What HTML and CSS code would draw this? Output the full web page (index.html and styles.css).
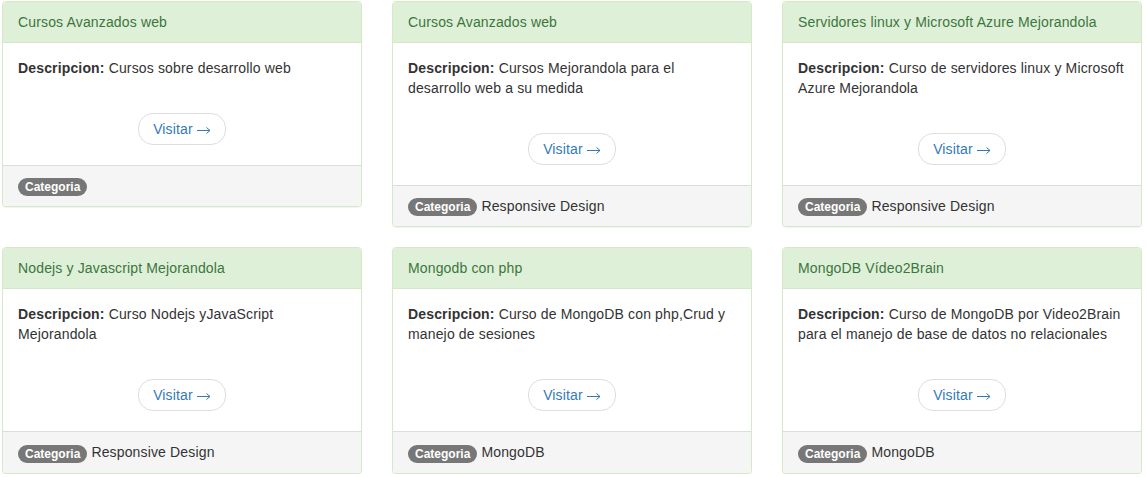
FILE: index.html
```html
<!DOCTYPE html>
<html lang="es">
<head>
<meta charset="utf-8">
<title>Cursos</title>
<link rel="stylesheet" href="styles.css">
</head>
<body>
<div class="grid">
  <div class="panel">
    <div class="panel-heading">Cursos Avanzados web</div>
    <div class="panel-body">
      <p><strong>Descripcion:</strong> Cursos sobre desarrollo web</p>
      <div class="pager"><a href="#">Visitar <svg class="arrow" viewBox="0 0 14 9" width="14" height="9"><path d="M0 4.5H13M9.5 1.5L13 4.5L9.5 7.5"/></svg></a></div>
    </div>
    <div class="panel-footer"><span class="badge">Categoria</span></div>
  </div>
  <div class="panel">
    <div class="panel-heading">Cursos Avanzados web</div>
    <div class="panel-body">
      <p><strong>Descripcion:</strong> Cursos Mejorandola para el desarrollo web a su medida</p>
      <div class="pager"><a href="#">Visitar <svg class="arrow" viewBox="0 0 14 9" width="14" height="9"><path d="M0 4.5H13M9.5 1.5L13 4.5L9.5 7.5"/></svg></a></div>
    </div>
    <div class="panel-footer"><span class="badge">Categoria</span> Responsive Design</div>
  </div>
  <div class="panel">
    <div class="panel-heading">Servidores linux y Microsoft Azure Mejorandola</div>
    <div class="panel-body">
      <p><strong>Descripcion:</strong> Curso de servidores linux y Microsoft Azure Mejorandola</p>
      <div class="pager"><a href="#">Visitar <svg class="arrow" viewBox="0 0 14 9" width="14" height="9"><path d="M0 4.5H13M9.5 1.5L13 4.5L9.5 7.5"/></svg></a></div>
    </div>
    <div class="panel-footer"><span class="badge">Categoria</span> Responsive Design</div>
  </div>
  <div class="panel">
    <div class="panel-heading">Nodejs y Javascript Mejorandola</div>
    <div class="panel-body">
      <p><strong>Descripcion:</strong> Curso Nodejs yJavaScript Mejorandola</p>
      <div class="pager"><a href="#">Visitar <svg class="arrow" viewBox="0 0 14 9" width="14" height="9"><path d="M0 4.5H13M9.5 1.5L13 4.5L9.5 7.5"/></svg></a></div>
    </div>
    <div class="panel-footer"><span class="badge">Categoria</span> Responsive Design</div>
  </div>
  <div class="panel">
    <div class="panel-heading">Mongodb con php</div>
    <div class="panel-body">
      <p><strong>Descripcion:</strong> Curso de MongoDB con php,Crud y manejo de sesiones</p>
      <div class="pager"><a href="#">Visitar <svg class="arrow" viewBox="0 0 14 9" width="14" height="9"><path d="M0 4.5H13M9.5 1.5L13 4.5L9.5 7.5"/></svg></a></div>
    </div>
    <div class="panel-footer"><span class="badge">Categoria</span> MongoDB</div>
  </div>
  <div class="panel">
    <div class="panel-heading">MongoDB Vídeo2Brain</div>
    <div class="panel-body">
      <p><strong>Descripcion:</strong> Curso de MongoDB por Video2Brain para el manejo de base de datos no relacionales</p>
      <div class="pager"><a href="#">Visitar <svg class="arrow" viewBox="0 0 14 9" width="14" height="9"><path d="M0 4.5H13M9.5 1.5L13 4.5L9.5 7.5"/></svg></a></div>
    </div>
    <div class="panel-footer"><span class="badge">Categoria</span> MongoDB</div>
  </div>
</div>
</body>
</html>
```
FILE: styles.css
```css
* { box-sizing: border-box; }
html, body { margin: 0; padding: 0; background: #fff; }
body {
  font-family: "Liberation Sans", Arial, Helvetica, sans-serif;
  font-size: 14px;
  line-height: 20px;
  letter-spacing: 0.15px;
  color: #333;
}
.grid {
  display: grid;
  grid-template-columns: repeat(3, 360px);
  column-gap: 30px;
  row-gap: 20px;
  align-items: start;
  padding: 1px 0 0 2px;
}
.panel {
  background: #fff;
  border: 1px solid #d6e9c6;
  border-radius: 4px;
  box-shadow: 0 1px 1px rgba(0,0,0,0.05);
  overflow: hidden;
}
.panel-heading {
  background: #dff0d8;
  color: #3c763d;
  padding: 10px 15px;
  border-bottom: 1px solid #d6e9c6;
}
.panel-body {
  padding: 15px 15px 0;
}
.panel-body p { margin: 0; }
.pager {
  margin: 35px 0 20px;
  text-align: center;
  line-height: 20px;
}
.pager a {
  display: inline-block;
  height: 32px;
  padding: 5px 14px;
  border: 1px solid #ddd;
  border-radius: 15px;
  background: #fff;
  color: #337ab7;
  text-decoration: none;
}
.arrow {
  vertical-align: -1px;
  fill: none;
  stroke: currentColor;
  stroke-width: 1;
}
.panel-footer {
  background: #f5f5f5;
  border-top: 1px solid #ddd;
  padding: 10px 15px;
}
.badge {
  display: inline-block;
  min-width: 10px;
  padding: 3px 7px;
  font-size: 12px;
  font-weight: bold;
  line-height: 1;
  letter-spacing: 0;
  color: #fff;
  text-align: center;
  white-space: nowrap;
  vertical-align: middle;
  background: #777;
  border-radius: 10px;
}
```
